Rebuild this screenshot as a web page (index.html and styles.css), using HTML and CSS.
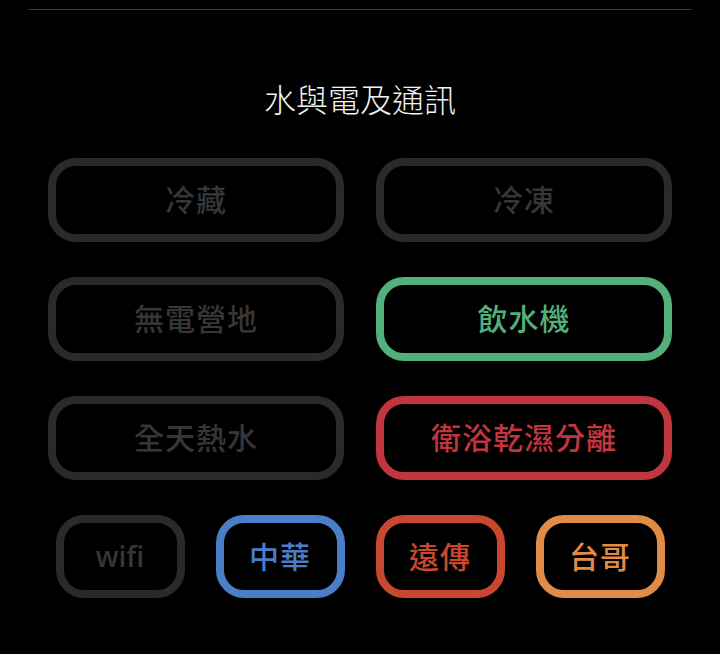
FILE: index.html
```html
<!DOCTYPE html>
<html lang="zh-Hant">
<head>
<meta charset="utf-8">
<link rel="stylesheet" href="styles.css">
</head>
<body>
<div class="page">
  <div class="rule"></div>
  <h1 class="title">水與電及通訊</h1>
  <div class="grid">
    <div class="btn off">冷藏</div>
    <div class="btn off">冷凍</div>
    <div class="btn off">無電營地</div>
    <div class="btn green">飲水機</div>
    <div class="btn off">全天熱水</div>
    <div class="btn red">衛浴乾濕分離</div>
  </div>
  <div class="row">
    <div class="btn small off latin">wifi</div>
    <div class="btn small blue">中華</div>
    <div class="btn small fet">遠傳</div>
    <div class="btn small orange">台哥</div>
  </div>
</div>
</body>
</html>
```

FILE: styles.css
```css
html, body {
  margin: 0;
  padding: 0;
  background: #000;
}
body {
  font-family: "Noto Sans CJK TC", "Noto Sans", sans-serif;
  color: #fff;
}
.page {
  width: 720px;
  height: 654px;
  overflow: hidden;
}
.rule {
  margin: 9px 28px 0;
  height: 1px;
  background: #3c3c3e;
}
.title {
  margin: 68px 0 0;
  height: 40px;
  line-height: 40px;
  text-align: center;
  font-size: 32px;
  font-weight: 300;
  color: #f2f2f2;
}
.grid {
  margin: 40px 48px 0;
  display: grid;
  grid-template-columns: 296px 296px;
  column-gap: 32px;
  row-gap: 35px;
}
.btn {
  box-sizing: border-box;
  height: 84px;
  border: 8px solid;
  border-radius: 28px;
  display: flex;
  align-items: center;
  justify-content: center;
  padding-bottom: 4px;
  font-size: 30px;
  font-weight: 500;
  letter-spacing: 1px;
}
.row {
  margin: 35px 48px 0;
  display: flex;
  justify-content: center;
  gap: 31px;
}
.small {
  width: 129px;
  height: 83px;
}
.latin {
  font-family: "Open Sans", "Noto Sans", sans-serif;
  font-size: 28px;
  font-weight: 600;
  letter-spacing: 0;
  padding-bottom: 2px;
}
.off {
  border-color: #2a2a2c;
  color: #363638;
}
.green {
  border-color: #52b07a;
  color: #52b07a;
}
.red {
  border-color: #c1353f;
  color: #c1353f;
}
.blue {
  border-color: #4a7ec6;
  color: #4a7ec6;
}
.fet {
  border-color: #c7472f;
  color: #c7472f;
}
.orange {
  border-color: #e08b46;
  color: #e08b46;
}
```
